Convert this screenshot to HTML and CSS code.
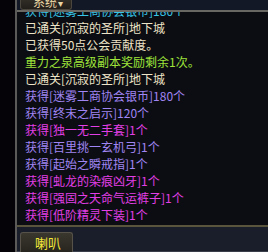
FILE: index.html
```html
<!DOCTYPE html>
<html lang="zh">
<head>
    <meta charset="UTF-8">
    <title>聊天窗口</title>
    <link rel="stylesheet" href="styles.css">
</head>
<body>
    <div class="frame">
        <div class="side"></div>
        <div class="main">
            <div class="topbar">
                <div class="tab-top"><span>系统</span><span class="arrow">▾</span></div>
            </div>
            <div class="chat">
                <ul class="lines">
                    <li class="cyan">获得[迷雾工商协会银币]180个</li>
                    <li class="white">已通关[沉寂的圣所]地下城</li>
                    <li class="white">已获得50点公会贡献度。</li>
                    <li class="green">重力之泉高级副本奖励剩余1次。</li>
                    <li class="white">已通关[沉寂的圣所]地下城</li>
                    <li class="purple">获得[迷雾工商协会银币]180个</li>
                    <li class="purple">获得[终末之启示]120个</li>
                    <li class="magenta">获得[独一无二手套]1个</li>
                    <li class="purple">获得[百里挑一玄机弓]1个</li>
                    <li class="purple">获得[起始之瞬戒指]1个</li>
                    <li class="magenta">获得[虬龙的染痕凶牙]1个</li>
                    <li class="magenta">获得[强固之天命气运裤子]1个</li>
                    <li class="magenta">获得[低阶精灵下装]1个</li>
                </ul>
            </div>
            <div class="bottombar">
                <div class="tab-bottom">喇叭</div>
            </div>
        </div>
    </div>
</body>
</html>
```

FILE: styles.css
```css
* {
    box-sizing: border-box;
}

body {
    margin: 0;
    padding: 0;
    overflow: hidden;
    background: #050407;
    font-family: "Noto Sans CJK SC", "DejaVu Sans", sans-serif;
    font-size: 12px;
}

.frame {
    display: flex;
    width: 268px;
    height: 252px;
}

.side {
    width: 17px;
    background: #060308;
    border-right: 2px solid #5c5a58;
}

.main {
    flex: 1;
    display: flex;
    flex-direction: column;
    background: #0c0d12;
}

.topbar {
    height: 12px;
    background: #131826;
    border-bottom: 2px solid #6a6862;
    padding-left: 3px;
}

.tab-top {
    width: 52px;
    height: 10px;
    background: linear-gradient(#302c26, #221f1b);
    border: 1px solid #4a463e;
    border-top: none;
    border-radius: 0 0 3px 3px;
    color: #ead6a4;
    line-height: 10px;
    padding-left: 12px;
    overflow: hidden;
    white-space: nowrap;
}

.tab-top span {
    position: relative;
    top: -3px;
}

.tab-top .arrow {
    font-size: 10px;
    margin-left: 1px;
}

.chat {
    flex: 1;
    overflow: hidden;
}

.lines {
    list-style: none;
    margin: -10px 0 0;
    padding: 0 0 0 8px;
}

.lines li {
    line-height: 17px;
    height: 17px;
    white-space: nowrap;
}

.cyan { color: #38c4e6; }
.white { color: #eee4c8; }
.green { color: #9ee43a; }
.purple { color: #a085f4; }
.magenta { color: #e23fe6; }

.bottombar {
    height: 27px;
    background: #1a1e2b;
    border-top: 2px solid #58553c;
    border-bottom: 1px solid #3a3e4a;
    padding: 5px 0 0 3px;
}

.tab-bottom {
    width: 53px;
    height: 21px;
    background: linear-gradient(#3a372e, #26241e);
    border: 1px solid #56524a;
    border-bottom: none;
    border-radius: 3px 3px 0 0;
    color: #f4e83a;
    font-size: 13px;
    line-height: 20px;
    padding-left: 14px;
}
```
